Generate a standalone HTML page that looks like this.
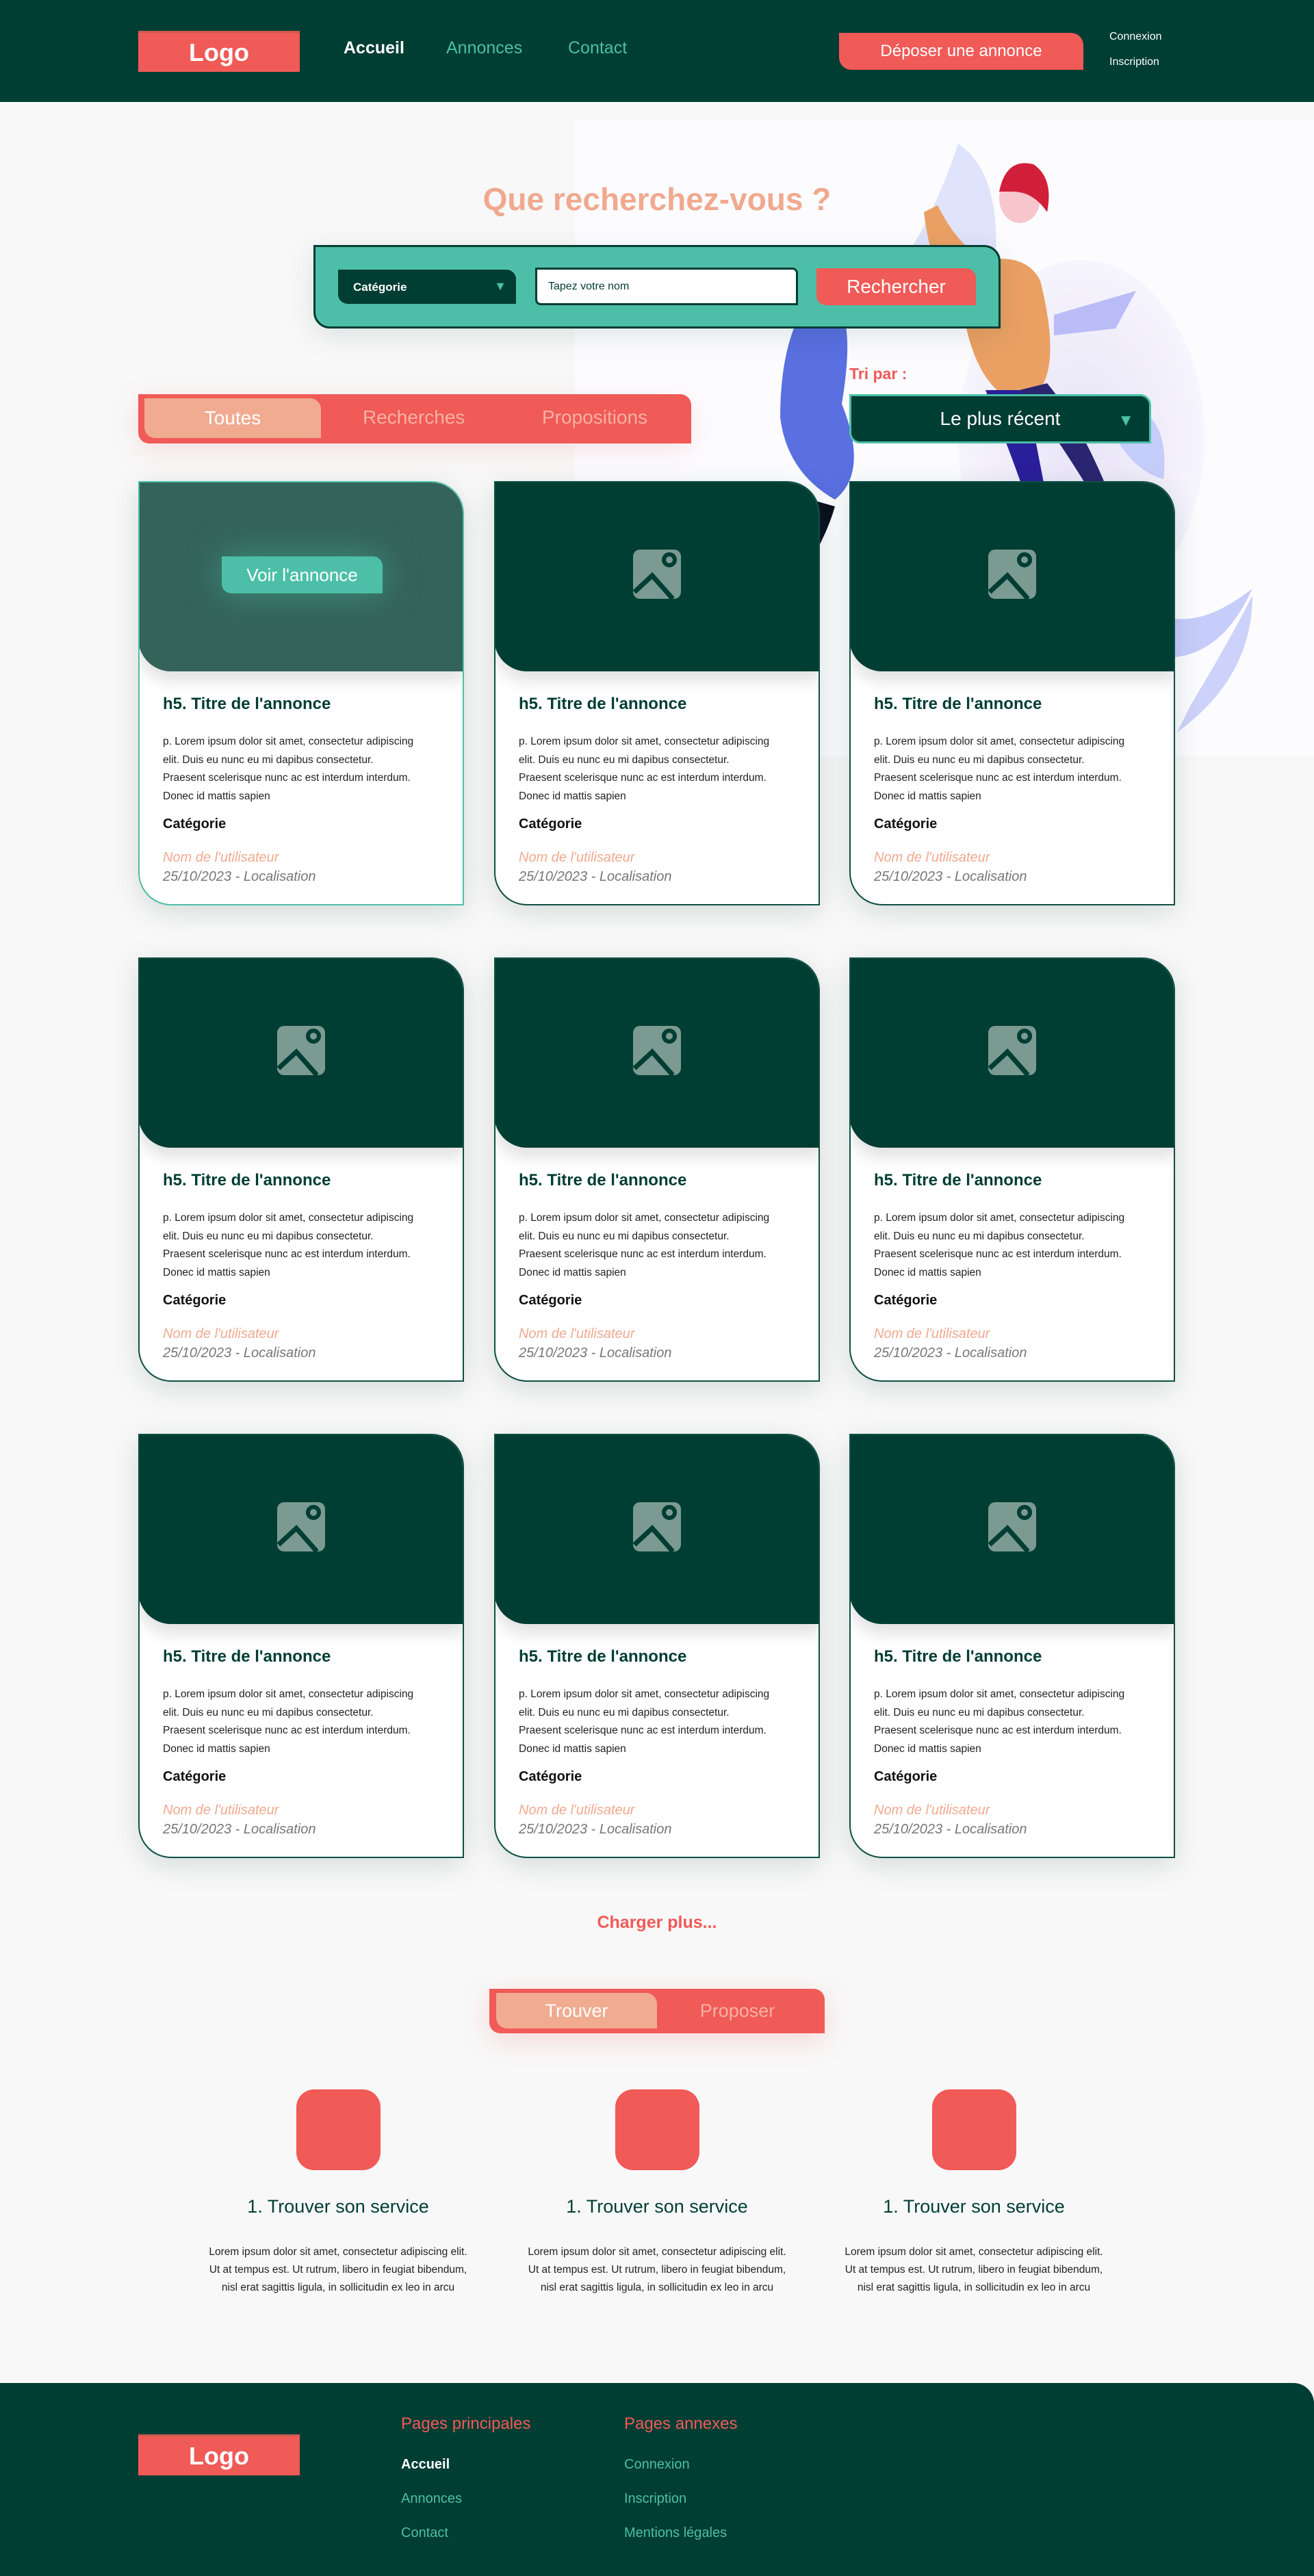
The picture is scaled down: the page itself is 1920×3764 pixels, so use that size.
<!DOCTYPE html>
<html><head><meta charset="utf-8">
<style>
*{box-sizing:border-box;margin:0;padding:0}
body{width:1920px;height:3764px;background:#f8f8f8;font-family:"Liberation Sans",sans-serif;position:relative;overflow:hidden}
.abs{position:absolute}
.dg{background:#003d33}
.red{background:#f05a57}
header{position:absolute;left:0;top:0;width:1920px;height:149px;background:#003d33}
.logo{position:absolute;background:#f05a57;color:#fff;font-weight:bold;font-size:36px;display:flex;align-items:center;justify-content:center;border-top:3px solid #c95a50}
.nav{position:absolute;top:56px;font-size:25px;color:#4dbfa8}
.card{position:absolute;width:476px;height:620px;background:#fff;border:2px solid #0e5044;border-radius:0 48px 0 48px;box-shadow:0 10px 40px rgba(0,60,50,.15);overflow:hidden}
.card .img{position:absolute;left:-2px;top:-2px;width:478px;height:278px;background:#003d33;border-radius:0 48px 0 48px;box-shadow:0 14px 24px rgba(0,0,0,.12)}
.card .img svg{position:absolute;left:203px;top:100px}
.card h5{position:absolute;left:34px;top:310px;font-size:24px;color:#003d33;font-weight:bold}
.card p{position:absolute;left:34px;top:366px;width:370px;font-size:15.5px;line-height:26.5px;color:#222}
.card .cat{position:absolute;left:34px;top:488px;font-size:20px;font-weight:bold;color:#111}
.card .nom{position:absolute;left:34px;top:537px;font-size:20px;font-style:italic;color:#f0a98f}
.card .date{position:absolute;left:34px;top:565px;font-size:20px;font-style:italic;color:#777}
.feat{position:absolute;width:420px;text-align:center}
.feat .ic{width:123px;height:118px;background:#f05a57;border-radius:26px;margin:0 auto}
.feat h3{margin-top:38px;font-size:27px;color:#003d33;font-weight:normal}
.feat p{margin:38px auto 0;width:385px;font-size:15.5px;line-height:26px;color:#222}
footer{position:absolute;left:0;top:3482px;width:1920px;height:282px;background:#003d33;border-radius:0 30px 0 0}
.fh{position:absolute;top:3528px;font-size:24px;color:#f05a57}
.fl{position:absolute;font-size:20px;color:#4dbfa8}
</style></head><body>
<header>
<div class="logo" style="left:202px;top:45px;width:236px;height:60px">Logo</div>
<div class="nav" style="left:502px;color:#fff;font-weight:bold">Accueil</div>
<div class="nav" style="left:652px">Annonces</div>
<div class="nav" style="left:830px">Contact</div>
<div class="abs red" style="left:1226px;top:48px;width:357px;height:54px;border-radius:0 18px 0 18px;color:#fff;font-size:24px;display:flex;align-items:center;justify-content:center">Déposer une annonce</div>
<div class="abs" style="left:1621px;top:45px;color:#fff;font-size:16px">Connexion</div>
<div class="abs" style="left:1621px;top:82px;color:#fff;font-size:16px">Inscription</div>
</header>

<div class="abs" style="left:840px;top:175px;width:1080px;height:930px;background:#fcfcff"></div>
<svg class="abs" style="left:840px;top:170px" width="1080" height="950">
<defs><radialGradient id="g1"><stop offset="0" stop-color="#e8e4f8"/><stop offset="1" stop-color="#f6f4fc"/></radialGradient></defs>
<ellipse cx="740" cy="470" rx="180" ry="260" fill="url(#g1)"/>
<path d="M560 40 Q620 80 615 200 Q560 260 460 240 Q520 160 560 40Z" fill="#dfe3fb"/>
<path d="M840 720 Q900 760 990 690 Q940 800 850 790Z" fill="#c7cdfa"/>
<path d="M900 860 Q960 760 990 700 Q990 820 880 900Z" fill="#cdd2fb"/>
<path d="M220 560 Q260 540 290 580 Q250 570 230 600Z" fill="#b5bdf6"/>
<path d="M810 420 Q870 440 860 530 Q820 520 790 470Z" fill="#c5cdfa"/>
<path d="M460 740 Q520 650 560 740 Q520 720 490 760Z" fill="#b4bbf5"/>
<path d="M340 270 Q420 240 390 420 Q430 520 380 560 Q310 520 300 440 Q300 330 340 270Z" fill="#5a6fe0"/>
<path d="M345 560 Q310 640 280 700 L300 710 Q360 640 380 570Z" fill="#0c1020"/>
<path d="M530 130 Q560 190 600 210 Q660 200 680 240 Q720 400 650 420 Q590 400 570 300 Q520 230 510 140Z" fill="#eaa063"/>
<path d="M600 400 Q640 500 660 560 L690 560 Q670 460 660 400Z" fill="#2a1f9a"/>
<path d="M650 400 Q700 460 760 560 L780 550 Q740 450 690 390Z" fill="#2a2570"/>
<ellipse cx="650" cy="120" rx="30" ry="36" fill="#f7c6cc"/>
<path d="M620 110 Q630 60 670 70 Q700 90 690 140 Q670 110 640 110Z" fill="#d11f3a"/>
<path d="M700 290 L820 255 L790 310 L700 320Z" fill="#b9bcf7"/>
</svg>

<div class="abs" style="left:0;top:264px;width:1920px;text-align:center;font-size:46px;font-weight:bold;color:#f0a98f">Que recherchez-vous ?</div>

<div class="abs" style="left:458px;top:358px;width:1004px;height:122px;background:#4dbfa8;border:3px solid #003d33;border-radius:0 24px 0 24px;box-shadow:0 10px 40px rgba(0,60,50,.12)"></div>
<div class="abs dg" style="left:494px;top:394px;width:260px;height:50px;border-radius:0 14px 0 14px;color:#fff;font-size:17px;font-weight:bold;padding:16px 0 0 22px">Catégorie<span style="position:absolute;right:14px;top:14px;color:#4dbfa8;font-size:18px">▼</span></div>
<div class="abs" style="left:782px;top:391px;width:384px;height:55px;background:#fff;border:3px solid #003d33;border-radius:0 8px 0 8px;font-size:16px;color:#003d33;padding:16px 0 0 16px">Tapez votre nom</div>
<div class="abs red" style="left:1193px;top:392px;width:233px;height:54px;border-radius:0 14px 0 14px;color:#fff;font-size:28px;display:flex;align-items:center;justify-content:center">Rechercher</div>

<div class="abs red" style="left:202px;top:576px;width:808px;height:72px;border-radius:0 16px 0 16px;box-shadow:0 10px 40px rgba(240,90,87,.15)"></div>
<div class="abs" style="left:211px;top:582px;width:258px;height:58px;background:#f0ab91;border-radius:0 16px 0 16px;color:#fff;font-size:28px;display:flex;align-items:center;justify-content:center">Toutes</div>
<div class="abs" style="left:530px;top:594px;font-size:28px;color:#f7b1a3">Recherches</div>
<div class="abs" style="left:792px;top:594px;font-size:28px;color:#f7b1a3">Propositions</div>
<div class="abs" style="left:1241px;top:533px;font-size:23px;color:#f05a57;font-weight:bold">Tri par :</div>
<div class="abs dg" style="left:1241px;top:576px;width:441px;height:72px;border:3px solid #4dbfa8;border-radius:0 16px 0 16px;color:#fff;font-size:28px;display:flex;align-items:center;justify-content:center">Le plus récent<span style="position:absolute;right:22px;top:22px;color:#4dbfa8;font-size:24px">▼</span></div>

<div class="card" style="left:202px;top:703px;border-color:#4dbfa8"><div class="img" style="background:#34635a"><div class="abs" style="left:122px;top:110px;width:235px;height:54px;background:#4dbfa8;border-radius:0 14px 0 14px;color:#fff;font-size:26px;display:flex;align-items:center;justify-content:center;box-shadow:0 0 50px rgba(77,191,168,.5)">Voir l'annonce</div></div><h5>h5. Titre de l'annonce</h5><p>p. Lorem ipsum dolor sit amet, consectetur adipiscing elit. Duis eu nunc eu mi dapibus consectetur. Praesent scelerisque nunc ac est interdum interdum. Donec id mattis sapien</p><div class="cat">Catégorie</div><div class="nom">Nom de l'utilisateur</div><div class="date">25/10/2023 - Localisation</div></div>

<div class="card" style="left:722px;top:703px"><div class="img"><svg width="72" height="72" viewBox="0 0 72 72"><rect x="0" y="0" width="70" height="72" rx="10" fill="#7a9a92"/><path d="M2 62 L28 38 L58 72" stroke="#003d33" stroke-width="7" fill="none"/><circle cx="53" cy="15" r="8" fill="none" stroke="#003d33" stroke-width="6"/></svg></div><h5>h5. Titre de l'annonce</h5><p>p. Lorem ipsum dolor sit amet, consectetur adipiscing elit. Duis eu nunc eu mi dapibus consectetur. Praesent scelerisque nunc ac est interdum interdum. Donec id mattis sapien</p><div class="cat">Catégorie</div><div class="nom">Nom de l'utilisateur</div><div class="date">25/10/2023 - Localisation</div></div>
<div class="card" style="left:1241px;top:703px"><div class="img"><svg width="72" height="72" viewBox="0 0 72 72"><rect x="0" y="0" width="70" height="72" rx="10" fill="#7a9a92"/><path d="M2 62 L28 38 L58 72" stroke="#003d33" stroke-width="7" fill="none"/><circle cx="53" cy="15" r="8" fill="none" stroke="#003d33" stroke-width="6"/></svg></div><h5>h5. Titre de l'annonce</h5><p>p. Lorem ipsum dolor sit amet, consectetur adipiscing elit. Duis eu nunc eu mi dapibus consectetur. Praesent scelerisque nunc ac est interdum interdum. Donec id mattis sapien</p><div class="cat">Catégorie</div><div class="nom">Nom de l'utilisateur</div><div class="date">25/10/2023 - Localisation</div></div>

<div class="card" style="left:202px;top:1399px"><div class="img"><svg width="72" height="72" viewBox="0 0 72 72"><rect x="0" y="0" width="70" height="72" rx="10" fill="#7a9a92"/><path d="M2 62 L28 38 L58 72" stroke="#003d33" stroke-width="7" fill="none"/><circle cx="53" cy="15" r="8" fill="none" stroke="#003d33" stroke-width="6"/></svg></div><h5>h5. Titre de l'annonce</h5><p>p. Lorem ipsum dolor sit amet, consectetur adipiscing elit. Duis eu nunc eu mi dapibus consectetur. Praesent scelerisque nunc ac est interdum interdum. Donec id mattis sapien</p><div class="cat">Catégorie</div><div class="nom">Nom de l'utilisateur</div><div class="date">25/10/2023 - Localisation</div></div>
<div class="card" style="left:722px;top:1399px"><div class="img"><svg width="72" height="72" viewBox="0 0 72 72"><rect x="0" y="0" width="70" height="72" rx="10" fill="#7a9a92"/><path d="M2 62 L28 38 L58 72" stroke="#003d33" stroke-width="7" fill="none"/><circle cx="53" cy="15" r="8" fill="none" stroke="#003d33" stroke-width="6"/></svg></div><h5>h5. Titre de l'annonce</h5><p>p. Lorem ipsum dolor sit amet, consectetur adipiscing elit. Duis eu nunc eu mi dapibus consectetur. Praesent scelerisque nunc ac est interdum interdum. Donec id mattis sapien</p><div class="cat">Catégorie</div><div class="nom">Nom de l'utilisateur</div><div class="date">25/10/2023 - Localisation</div></div>
<div class="card" style="left:1241px;top:1399px"><div class="img"><svg width="72" height="72" viewBox="0 0 72 72"><rect x="0" y="0" width="70" height="72" rx="10" fill="#7a9a92"/><path d="M2 62 L28 38 L58 72" stroke="#003d33" stroke-width="7" fill="none"/><circle cx="53" cy="15" r="8" fill="none" stroke="#003d33" stroke-width="6"/></svg></div><h5>h5. Titre de l'annonce</h5><p>p. Lorem ipsum dolor sit amet, consectetur adipiscing elit. Duis eu nunc eu mi dapibus consectetur. Praesent scelerisque nunc ac est interdum interdum. Donec id mattis sapien</p><div class="cat">Catégorie</div><div class="nom">Nom de l'utilisateur</div><div class="date">25/10/2023 - Localisation</div></div>

<div class="card" style="left:202px;top:2095px"><div class="img"><svg width="72" height="72" viewBox="0 0 72 72"><rect x="0" y="0" width="70" height="72" rx="10" fill="#7a9a92"/><path d="M2 62 L28 38 L58 72" stroke="#003d33" stroke-width="7" fill="none"/><circle cx="53" cy="15" r="8" fill="none" stroke="#003d33" stroke-width="6"/></svg></div><h5>h5. Titre de l'annonce</h5><p>p. Lorem ipsum dolor sit amet, consectetur adipiscing elit. Duis eu nunc eu mi dapibus consectetur. Praesent scelerisque nunc ac est interdum interdum. Donec id mattis sapien</p><div class="cat">Catégorie</div><div class="nom">Nom de l'utilisateur</div><div class="date">25/10/2023 - Localisation</div></div>
<div class="card" style="left:722px;top:2095px"><div class="img"><svg width="72" height="72" viewBox="0 0 72 72"><rect x="0" y="0" width="70" height="72" rx="10" fill="#7a9a92"/><path d="M2 62 L28 38 L58 72" stroke="#003d33" stroke-width="7" fill="none"/><circle cx="53" cy="15" r="8" fill="none" stroke="#003d33" stroke-width="6"/></svg></div><h5>h5. Titre de l'annonce</h5><p>p. Lorem ipsum dolor sit amet, consectetur adipiscing elit. Duis eu nunc eu mi dapibus consectetur. Praesent scelerisque nunc ac est interdum interdum. Donec id mattis sapien</p><div class="cat">Catégorie</div><div class="nom">Nom de l'utilisateur</div><div class="date">25/10/2023 - Localisation</div></div>
<div class="card" style="left:1241px;top:2095px"><div class="img"><svg width="72" height="72" viewBox="0 0 72 72"><rect x="0" y="0" width="70" height="72" rx="10" fill="#7a9a92"/><path d="M2 62 L28 38 L58 72" stroke="#003d33" stroke-width="7" fill="none"/><circle cx="53" cy="15" r="8" fill="none" stroke="#003d33" stroke-width="6"/></svg></div><h5>h5. Titre de l'annonce</h5><p>p. Lorem ipsum dolor sit amet, consectetur adipiscing elit. Duis eu nunc eu mi dapibus consectetur. Praesent scelerisque nunc ac est interdum interdum. Donec id mattis sapien</p><div class="cat">Catégorie</div><div class="nom">Nom de l'utilisateur</div><div class="date">25/10/2023 - Localisation</div></div>

<div class="abs" style="left:0;top:2795px;width:1920px;text-align:center;font-size:25px;font-weight:bold;color:#f05a57">Charger plus...</div>

<div class="abs red" style="left:715px;top:2906px;width:490px;height:65px;border-radius:0 16px 0 16px;box-shadow:0 10px 40px rgba(240,90,87,.2)"></div>
<div class="abs" style="left:725px;top:2912px;width:235px;height:52px;background:#f0ab91;border-radius:0 16px 0 16px;color:#fff;font-size:27px;display:flex;align-items:center;justify-content:center">Trouver</div>
<div class="abs" style="left:960px;top:2912px;width:235px;height:52px;color:#f7b1a3;font-size:27px;display:flex;align-items:center;justify-content:center">Proposer</div>

<div class="feat" style="left:284px;top:3053px"><div class="ic"></div><h3>1. Trouver son service</h3><p>Lorem ipsum dolor sit amet, consectetur adipiscing elit. Ut at tempus est. Ut rutrum, libero in feugiat bibendum, nisl erat sagittis ligula, in sollicitudin ex leo in arcu</p></div>
<div class="feat" style="left:750px;top:3053px"><div class="ic"></div><h3>1. Trouver son service</h3><p>Lorem ipsum dolor sit amet, consectetur adipiscing elit. Ut at tempus est. Ut rutrum, libero in feugiat bibendum, nisl erat sagittis ligula, in sollicitudin ex leo in arcu</p></div>
<div class="feat" style="left:1213px;top:3053px"><div class="ic"></div><h3>1. Trouver son service</h3><p>Lorem ipsum dolor sit amet, consectetur adipiscing elit. Ut at tempus est. Ut rutrum, libero in feugiat bibendum, nisl erat sagittis ligula, in sollicitudin ex leo in arcu</p></div>

<footer></footer>
<div class="logo" style="left:202px;top:3557px;width:236px;height:60px">Logo</div>
<div class="fh" style="left:586px">Pages principales</div>
<div class="fh" style="left:912px">Pages annexes</div>
<div class="fl" style="left:586px;top:3590px;color:#fff;font-weight:bold">Accueil</div>
<div class="fl" style="left:586px;top:3640px">Annonces</div>
<div class="fl" style="left:586px;top:3690px">Contact</div>
<div class="fl" style="left:912px;top:3590px">Connexion</div>
<div class="fl" style="left:912px;top:3640px">Inscription</div>
<div class="fl" style="left:912px;top:3690px">Mentions légales</div>
</body></html>
